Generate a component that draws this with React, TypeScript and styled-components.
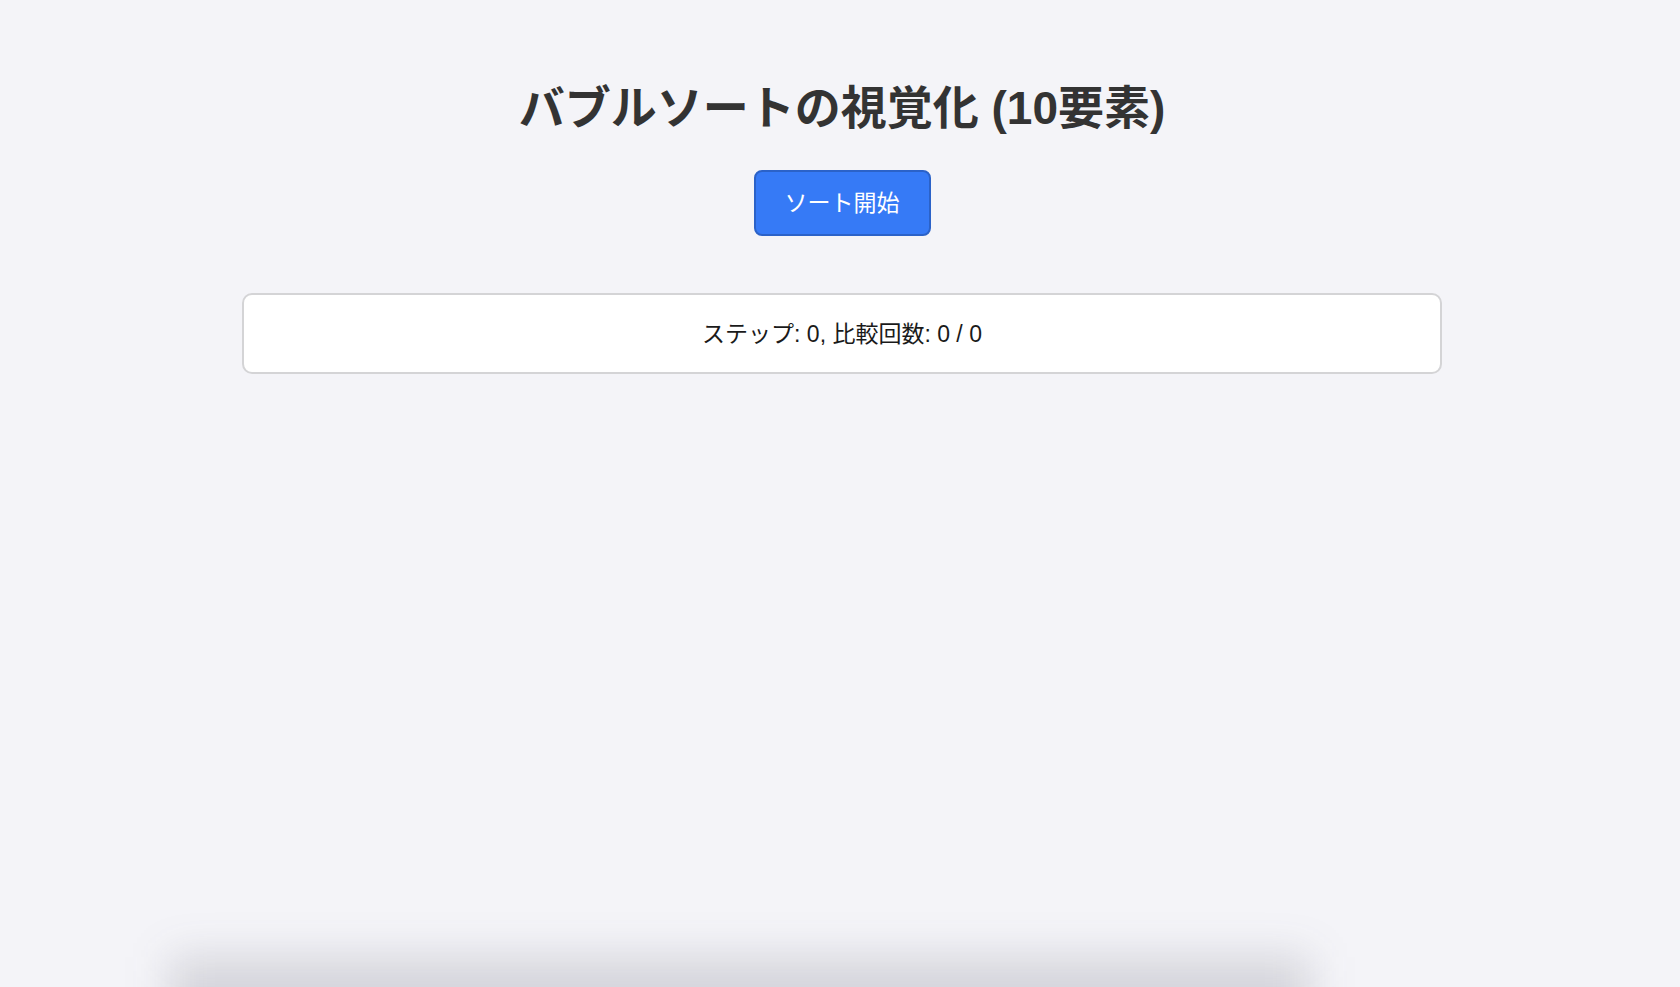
import React from 'react';
import styled, { createGlobalStyle } from 'styled-components';

const GlobalStyle = createGlobalStyle`
  html, body {
    margin: 0;
    padding: 0;
    background: #f4f4f8;
    font-family: "Liberation Sans", "Noto Sans CJK JP", sans-serif;
  }
`;

const Page = styled.main`
  min-height: 987px;
  box-sizing: border-box;
  padding: 82px 0 0 4px;
  display: flex;
  flex-direction: column;
  align-items: center;
`;

const Title = styled.h1`
  margin: 0;
  font-size: 46px;
  line-height: 53px;
  font-weight: 700;
  color: #333;
`;

const StartButton = styled.button`
  margin-top: 35px;
  padding: 16px 29px;
  font-family: inherit;
  font-size: 23px;
  line-height: 30px;
  color: #fff;
  background: #367af6;
  border: 2px solid #2b62c8;
  border-radius: 8px;
  cursor: pointer;
`;

const StatusPanel = styled.div`
  margin-top: 57px;
  width: 1200px;
  height: 81px;
  box-sizing: border-box;
  display: flex;
  align-items: center;
  justify-content: center;
  padding-bottom: 3px;
  background: #fff;
  border: 2px solid #d4d4d6;
  border-radius: 10px;
  font-size: 23px;
  color: #1a1a1a;
`;

// ウィンドウ下端にかかっている影
const BottomShade = styled.div`
  position: fixed;
  left: 170px;
  bottom: -50px;
  width: 1140px;
  height: 80px;
  background: rgba(60, 60, 80, 0.17);
  filter: blur(22px);
  pointer-events: none;
`;

const App: React.FC = () => {
  const step = 0;
  const compared = 0;
  const total = 0;

  return (
    <>
      <GlobalStyle />
      <Page>
        <Title>バブルソートの視覚化 (10要素)</Title>
        <StartButton>ソート開始</StartButton>
        <StatusPanel>
          ステップ: {step}, 比較回数: {compared} / {total}
        </StatusPanel>
      </Page>
      <BottomShade />
    </>
  );
};

export default App;
